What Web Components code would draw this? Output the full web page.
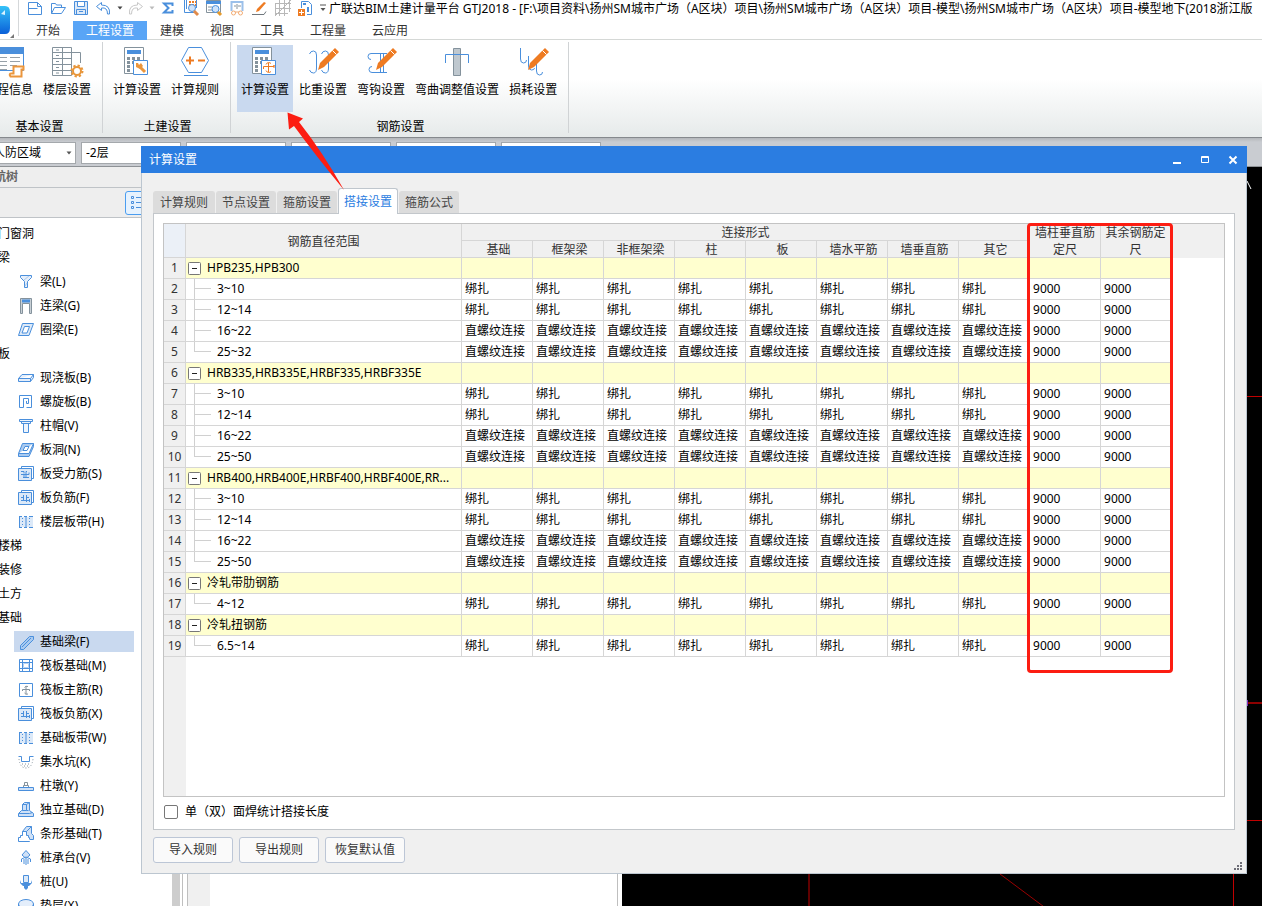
<!DOCTYPE html>
<html lang="zh-CN">
<head>
<meta charset="utf-8">
<title>广联达BIM土建计量平台 GTJ2018</title>
<style>
  html, body { margin: 0; height: 100%; overflow: hidden; }
  body { font: 12px/16px "Noto Sans", "Noto Sans CJK SC", sans-serif; color: #000; background: #fff; }
</style>
</head>
<body>
<cad-app></cad-app>
<script>
const B = '#4a8fdc', O = '#ee7b22', G = '#84929c';
const pencil = `<path d="M13 17 28 2l4 4-15 15-6 3z" fill="${O}"/><path d="m25.500 4.500 4 4" stroke="#fff"/>`.replaceAll('.500', '.5');
const calc = `<path d="M1.5 1.5h19v26h-19z" fill="#fff" stroke="${G}"/><path d="M4 4h14v4H4z" fill="${B}"/><path d="M4 11h3v3H4zm5 0h3v3H9zm5 0h3v3h-3zM4 15h3v3H4zm5 0h3v3H9zM4 19h3v3H4zm0 4h3v3H4z" fill="${G}"/><path d="M10.5 14.5h14v14h-14z" fill="#fff" stroke="${B}"/>`;
const sheet = `<path d="M3.5 2.500V.5h12v12h-2" fill="#fff" stroke="${B}"/><path d="M.5 2.5h13v12H.5z" fill="#dce9f8" stroke="${B}"/>`;
/* name: [width, height, markup] */
const ICONS = {
  logo: [20, 40, `<defs><linearGradient id="g" x2="0" y2="1"><stop stop-color="#35c2f8"/><stop offset="1" stop-color="#0a5fd8"/></linearGradient></defs><path d="M0 6h5q5 0 5 6v16q0 6-5 6H0z" fill="url(#g)"/><path d="m1 14 4-4v5z" fill="#d8f2ff"/><path d="M14 34v4h-4z" fill="#777"/><path d="M18.5 0v36" stroke="#d5d8da"/>`],
  doc: [14, 14, `<path d="M.5 1.5v12h13v-8l-4-4zM9.5 1.5v4h4M.5 7.5h9" fill="none" stroke="${B}"/>`],
  open: [16, 14, `<path d="M1.5 12.5v-10h4l1 1.5h5v3M1.5 12.5l3-6h11l-4 6z" fill="#fff" stroke="${B}"/>`],
  save: [14, 14, `<path d="M.5.5h13v13H.5zM3.500.5v5h7v-5M2.5 13.5v-5h9v5M5 10.5h4" fill="#dce9f8" stroke="${B}"/>`],
  undo: [15, 13, `<path d="m5.5.5-5 4 5 4V6q6-1 6 6h2q1-9-8-9z" fill="#fff" stroke="${B}"/>`],
  redo: [15, 13, `<path d="m9.5.5 5 4-5 4V6q-6-1-6 6h-2q-1-9 8-9z" fill="#fff" stroke="#c8c8c8"/>`],
  down: [6, 4, `<path d="M.5.5h5L3 3.5z" fill="currentColor"/>`],
  sum: [12, 12, `<path d="M10.5 4V1.500H2L6.500 6 2 10.5h8.500V8" fill="none" stroke="${B}" stroke-width="2"/>`],
  report: [16, 16, `<path d="M1.500 0v12.500H12M3.500 0v9" stroke="${B}" fill="none"/><path d="M6 2h8M6 5h8" stroke="${O}" stroke-width="2" stroke-dasharray="2 1"/><path d="M13.500 0v8" stroke="${B}"/><circle cx="9" cy="8" r="3.5" fill="#cfe3fa" stroke="${B}"/><path d="m11 11 4 4" stroke="#e08a4a" stroke-width="3"/>`],
  find: [16, 16, `<path d="M.5.5h14v12H.5z" fill="#fff" stroke="${G}"/><path d="M0 1h15v3H0z" fill="${B}"/><path d="M2 7h4M2 10h4" stroke="${G}"/><circle cx="9.5" cy="9" r="3.5" fill="#cfe3fa" stroke="${B}"/><path d="m12 12 3 3" stroke="#e59a2c" stroke-width="3"/>`],
  glasses: [14, 15, `<path d="M1.5 0v10M12.5 0v10M1 1h12" stroke="#9bc0ea" stroke-width="2"/><path d="M4 5h2m2 0h3M7 3v5" stroke="${G}"/><circle cx="3.5" cy="12" r="2" fill="none" stroke="#f2ac74"/><circle cx="10.5" cy="12" r="2" fill="none" stroke="#f2ac74"/><path d="M5 11h4" stroke="#f2ac74"/>`],
  pen: [15, 13, `<path d="M12 0l2 1-7 8-3 1 1-3z" fill="${O}"/><path d="M0 12.500h12l2-3" stroke="#6f777d" fill="none"/>`],
  mesh: [16, 16, `<path d="M.5 3v12.500M4.5 0v16M9.5 0v16M14.5 0v12M0 3.500h16M0 8.500h16M0 13.500h13M0 16 16 0" stroke="#b8b8b8" fill="none"/>`],
  adddoc: [15, 15, `<path d="M3.5 7V.5h7l3 3v10H9" fill="#fff" stroke="${B}"/><path d="M5 3h3m2 3v5" stroke="${B}" stroke-width="2"/><path d="M0 8h7v7H0z" fill="${O}"/><path d="M3.5 9v5M1 11.500h5" stroke="#fff"/>`],
  more: [6, 8, `<path d="M0 1h6" stroke="#555"/><path d="M.5 4h5L3 7z" fill="#555"/>`],
  info: [32, 32, `<path d="M1.5 2.500h29v22h-29z" fill="#fff" stroke="${B}"/><path d="M1 1h30v7H1z" fill="${B}"/><path d="M4 11.500h10m3 0h10M4 15.500h10m3 0h10M4 19.500h10m3 0h7M4 23.500h10" stroke="#97a1a8"/><path d="M20.500 20.500h10v3h-2v7h-11q-2-3 1-3h2z" fill="#fff" stroke="#eb963c" stroke-width="2"/>`],
  floors: [32, 32, `<path d="M1.5 1.500h19v28h-19zM1 6.500h20M1 12.500h20M1 18.500h20M1 24.500h20M11.500 1v29M21 6.500h8.500V17" fill="none" stroke="${G}"/><path d="M5 4h3M5 9.500h3M5 15.500h3M5 21.500h3M5 27h3" stroke="${G}"/><circle cx="26" cy="25" r="4" fill="#fff" stroke="#e8963a" stroke-width="2"/><circle cx="26" cy="25" r="5.500" fill="none" stroke="#e8963a" stroke-width="2" stroke-dasharray="2.300 2"/>`],
  calcwrench: [28, 30, calc + `<path d="m16 20 6 6" stroke="#eb963c" stroke-width="3"/><path d="M13 17h2l1 2 2-2 2 3-3 3-4-2z" fill="#eb963c"/>`],
  rules: [30, 30, `<path d="M8.500 1.500h13l7 13-7 12h-13l-7-12z" fill="#fff" stroke="${B}"/><path d="M6 14.500h8M10 10.500v8M18 14.500h7" stroke="${O}" stroke-width="2"/><path d="M4 29.500h24" stroke="${B}"/>`],
  calcplus: [28, 30, calc + `<path d="M12.500 23v-2.500H23V19M17.500 17v9M15 18.500q1-2 2.500-2t2.500 1M15 24.500q1 2 2.500 2t2.500-1M23 19v3" fill="none" stroke="${O}"/>`],
  weight: [32, 32, `<path d="M2.500 8q1-3 4-3t3 4v13q0 5-3 5t-4-3M14.500 8q1-3 4-3t3 4v13q0 5-3 5t-4-3" fill="none" stroke="${B}"/>` + pencil],
  hook: [32, 32, `<path d="M6 13.500q-3 0-3-3t3-3h16M7 20.500q-3 0-3 3t3 3h15M15.500 7v20M18.500 7v20" fill="none" stroke="${B}"/>` + pencil],
  bend: [30, 32, `<path d="M11.500 2.500h7v27h-7z" fill="#bfc8cf" stroke="${G}"/><path d="M3.500 17V8.500h23V17" fill="none" stroke="${B}"/>`],
  loss: [32, 32, `<path d="M3.500 2v11q0 4 3 4t3-3M11.500 10v10q0 4 3 4t3-2M19.500 18v7q0 4 3 4t3-3" fill="none" stroke="${B}"/>` + pencil],
  list: [16, 16, `<path d="M1.500 1.500h2v2h-2zm0 5h2v2h-2zm0 5h2v2h-2zM6 2.500h10M6 7.500h10M6 12.500h10" fill="none" stroke="${B}"/>`],
  beam: [16, 16, `<path d="M2.500 1.500h11v2l-4 4v6h-3v-6l-4-4z" fill="#e6effa" stroke="${B}"/><path d="m6 6 5-4M7 12l2-3" stroke="#a9c8ee"/>`],
  coupling: [16, 16, `<path d="M2.500.500h11v15h-2V5.500h-7v10h-2z" fill="#c8d0d6" stroke="${G}"/><path d="M4 3h8" stroke="${B}" stroke-width="3"/>`],
  ring: [16, 16, `<path d="M4.500 1.500h11l-4.500 12H.500zM6.500 4.500h5l-2.500 6.500H4z" fill="#dce9f8" fill-rule="evenodd" stroke="${B}"/>`],
  slab: [16, 16, `<path d="M.500 8.500 4 4.500h11.500v3l-3 4H.500zM.500 8.500h12l3-4M12.500 8.500v3" fill="#e4eefb" stroke="${B}"/>`],
  spiral: [16, 16, `<path d="M8.500 13.500h5v-12h-12v12h4v-9h5v5h-2v-2.500" fill="none" stroke="${B}"/>`],
  cap: [16, 16, `<path d="M1.500 1.500h13v2h-2v2h-2v9h-5v-9h-2v-2h-2zM3 3.500h10M5 5.500h6" fill="#eef5fd" stroke="${B}"/>`],
  hole: [16, 16, `<path d="M4.500 1.500h11l-4.500 10H.500zM.500 11.500v3h10.500l4.500-10v-3" fill="#a9caf0" stroke="${B}"/><path d="M7 4.500h4l-2 4H5z" fill="#fff" stroke="${B}"/>`],
  rebar: [16, 16, sheet + `<path d="M3 5.500h3v2M3 8.500h8M5 11.500h6m-5-3v3m3-6h-1v6m3-5v2" stroke="${B}"/>`],
  negbar: [16, 16, sheet + `<path d="M5.500 5v6m3-6v7m3-3v3M3 10.500h9M3 7.500h3m2 0h3" stroke="${B}"/>`],
  strip: [16, 16, `<path d="M1 3h14v10H1z" fill="#dce9f8"/><path d="M1 2.500h3m2 0h3m2 0h4M1 13.500h3m2 0h3m2 0h4M1.500 2v12M8 2v12" stroke="${B}"/><path d="M4.500 4v8m7-8v8" stroke="${B}" stroke-dasharray="1 2"/>`],
  found: [16, 16, `<path d="M11.500 2.500h4v3l-10 10H2.500v-4z" fill="#a9caf0" stroke="${B}"/><path d="M4 13l9-9" stroke="${B}"/>`],
  raft: [16, 16, `<path d="M1.500 1.500h13v12h-13zM4.500 1v13M11.500 1v13M1 4.500h14M1 10.500h14" fill="none" stroke="${B}"/><path d="M5.500 5.500h5v4h-5z" fill="#fff" stroke="#b4d0f2"/>`],
  mainbar: [16, 16, `<path d="M1.500 1.500h13v13h-13z" fill="#fff" stroke="${B}"/><path d="M4.500 9V7.500h7V9M8 4v8M6.500 5.500q1-2 3.500-1M6.500 11q1 2 3.500 1" stroke="${G}"/>`],
  pit: [16, 16, `<path d="M.500 2.500h3v5h8v-5h4" fill="none" stroke="${B}"/><path d="M1 5q1 9 7 9t7-9M4 10h9M6 12h5" fill="none" stroke="${G}" stroke-dasharray="1 2"/>`],
  pier: [16, 16, `<path d="M.500 9.500h15v3H.500z" fill="#cfe1f7" stroke="${B}"/><path d="M5.500 9V7.500h5V9M6.500 7V4.500h3V7" fill="none" stroke="${G}"/>`],
  pad: [16, 16, `<path d="M.500 11.500l3-3h1v-6l2-2h5v8l4 3v3h-15z" fill="#cfe1f7" stroke="${B}"/><path d="M1 11.500h10.500l3-1M4.500 2.500h4v6h-4m4-6 3-2m-3 8h2" stroke="${B}"/>`],
  stripf: [16, 16, `<path d="M4.500 5.500l4-5h5v7l2 2v4h-4v2H.500v-4h2v-2h2z" fill="#cfe1f7" stroke="${B}"/><path d="M5 6h4v3h1v2h2v4H1v-3h2v-2h2z" fill="#fff"/><path d="M4.500 5.500h4l5-5m-5 5v4h2v2h1v2" stroke="${B}"/>`],
  pilecap: [16, 16, `<path d="M8 .500 12 5 8 8.500 4 5z" fill="#cfe1f7" stroke="${B}"/><path d="M3.500 12V9L8 7l4.500 2v3M8 9v6M6 9v5m4-5v5" stroke="${B}" fill="none"/>`],
  pile: [16, 16, `<path d="M5.500 1.500h5v7h-5z" fill="#dce9f8" stroke="${B}"/><path d="M3 6v3h10V6l1 3-3 3h-1v2l-2 2-2-2v-2H5L2 9z" fill="${B}"/>`],
  cushion: [16, 16, `<ellipse cx="8" cy="6" rx="7.500" ry="4.500" fill="#e4eefb" stroke="${B}"/><path d="M.500 6v5q7 6 15 0V6" fill="none" stroke="${B}"/>`],
  min: [10, 10, `<path d="M1 7h8v2H1z" fill="#fff"/>`],
  max: [10, 10, `<path d="M1.500 1.500h7v6h-7zM1 2.500h8" fill="none" stroke="#fff"/>`],
  close: [10, 10, `<path d="m1.500 1.500 7 7m0-7-7 7" stroke="#fff" stroke-width="2"/>`],
  minus: [13, 13, `<rect x=".5" y=".5" width="12" height="12" rx="1" fill="#fff" stroke="#777"/><path d="M4 6.500h5" stroke="#222"/>`],
  grip: [9, 9, `<path d="M6 0h2v2H6zM3 3h2v2H3zm3 0h2v2H6zM0 6h2v2H0zm3 0h2v2H3zm3 0h2v2H6z" fill="#6d6d76"/>`]
};

function define(name, css, html) {
  customElements.define(name, class extends HTMLElement {
    constructor() {
      super();
      this.attachShadow({ mode: 'open' });
    }
    connectedCallback() {
      if (this.shadowRoot.firstChild) return;
      const body = typeof html === 'function' ? html(this) : html;
      this.shadowRoot.innerHTML = `<style>*{box-sizing:border-box}button,select{font:inherit;color:inherit}${css}</style>${body}`;
    }
  });
}

define('app-icon', `:host{display:block;flex:none}svg{display:block;overflow:visible}`, el => {
  const [w, h, m] = ICONS[el.getAttribute('name')];
  return `<svg width="${w}" height="${h}" viewBox="0 0 ${w} ${h}" fill="none" aria-hidden="true">${m}</svg>`;
});

/* Quick-access bar with the document title */
define('title-bar', `
  :host{display:flex;align-items:flex-start;height:18px;overflow:hidden}
  button{border:0;background:none;padding:0;width:23px;height:16px;display:flex;align-items:center;justify-content:center;flex:none}
  button.arrow{width:9px;color:#444}
  button.off{color:#bbb}
  button.more{width:12px}
  span{white-space:nowrap;line-height:18px}
`, () => {
  const b = (n, t, c = '') => `<button class="${c}" title="${t}"><app-icon name="${n}"></app-icon></button>`;
  return b('doc', '新建') + b('open', '打开') + b('save', '保存') + b('undo', '撤销') + b('down', '撤销列表', 'arrow') +
    b('redo', '恢复') + b('down', '恢复列表', 'arrow off') + b('sum', '汇总') + b('report', '查看报表') + b('find', '查找') +
    b('glasses', '查看') + b('pen', '绘制') + b('mesh', '网格') + b('adddoc', '添加') + b('more', '更多', 'more') +
    `<span>广联达BIM土建计量平台 GTJ2018 - [F:\\项目资料\\扬州SM城市广场（A区块）项目\\扬州SM城市广场（A区块）项目-模型\\扬州SM城市广场（A区块）项目-模型地下(2018浙江版</span>`;
});

define('menu-tab', `
  :host{display:block}
  button{display:block;border:0;background:none;padding:0 13px;height:19px;line-height:19px;color:#333;white-space:nowrap}
  :host([active]) button{background:#59a5f6;color:#fff}
`, `<button role="tab"><slot></slot></button>`);

define('ribbon-tool', `
  :host{display:block;flex:none}
  button{display:flex;flex-direction:column;align-items:center;border:0;background:none;padding:1px 4px 0;height:67px;white-space:nowrap}
  .pic{height:36px}
  :host([active]) button{background:#c9d9ef}
`, el => `<button><span class="pic"><app-icon name="${el.getAttribute('icon')}"></app-icon></span><span><slot></slot></span></button>`);

define('ribbon-group', `
  :host{display:flex;flex-direction:column;flex:none;border-right:1px solid #d0d3d5;padding:3px 7px 0 6px;margin:2px 0 4px}
  .tools{display:flex;gap:2px}
  .cap{text-align:center;padding:7px 0 0 3px}
`, el => `<div class="tools"><slot></slot></div><div class="cap">${el.getAttribute('label')}</div>`);

define('combo-box', `
  :host{display:block;position:relative;flex:none;width:100px}
  :host([short]){width:88px}
  select{appearance:none;display:block;width:100%;height:22px;border:1px solid #a4a8ac;background:#fff;border-radius:0;padding:0 4px}
  app-icon{position:absolute;right:4px;top:9px;color:#555;pointer-events:none}
`, el => `<select aria-label="${el.getAttribute('label')}"><option>${el.getAttribute('value') || ''}</option></select><app-icon name="down"></app-icon>`);

define('tree-item', `
  :host{display:block;height:24px}
  button{display:flex;align-items:center;gap:6px;width:100%;height:21px;border:0;background:none;padding:0;line-height:21px;text-align:left;white-space:nowrap}
  :host([icon]){padding-left:16px}
  :host([icon]) button{padding-left:4px}
  :host([active]) button{background:#c9d9ef}
`, el => `<button role="treeitem">${el.hasAttribute('icon') ? `<app-icon name="${el.getAttribute('icon')}"></app-icon>` : ''}<span><slot></slot></span></button>`);

define('nav-tree', `
  :host{display:flex;flex-direction:column;flex:none;width:183px;overflow:hidden;background:#fff;border-right:1px solid #bfbfbf}
  header{flex:none;height:21px;background:#eee;border-bottom:1px solid #bfc3c7;line-height:20px;color:#666;font-weight:bold;text-indent:-18px}
  .bar{flex:none;height:30px;background:#eee;border-bottom:1px solid #bfc3c7;padding:3px 0 0 125px}
  .bar button{width:26px;height:24px;padding:3px 4px;border:1px solid #4a9df0;border-radius:3px;background:#e6f2fe}
  .list{flex:1;display:flex;min-height:0}
  nav{flex:1;padding-top:5px;margin-left:-2px;overflow:hidden}
  tree-item{margin-right:38px}
  .scroll{width:8px;background:#cdcdcd;margin-right:2px}
`, () => {
  const rows = [['门窗洞'], ['梁'], ['梁(L)', 'beam'], ['连梁(G)', 'coupling'], ['圈梁(E)', 'ring'], ['板'], ['现浇板(B)', 'slab'],
    ['螺旋板(B)', 'spiral'], ['柱帽(V)', 'cap'], ['板洞(N)', 'hole'], ['板受力筋(S)', 'rebar'], ['板负筋(F)', 'negbar'],
    ['楼层板带(H)', 'strip'], ['楼梯'], ['装修'], ['土方'], ['基础'], ['基础梁(F)', 'found', 1], ['筏板基础(M)', 'raft'],
    ['筏板主筋(R)', 'mainbar'], ['筏板负筋(X)', 'negbar'], ['基础板带(W)', 'strip'], ['集水坑(K)', 'pit'], ['柱墩(Y)', 'pier'],
    ['独立基础(D)', 'pad'], ['条形基础(T)', 'stripf'], ['桩承台(V)', 'pilecap'], ['桩(U)', 'pile'], ['垫层(X)', 'cushion']];
  return `<header>导航树</header><div class="bar"><button title="列表"><app-icon name="list"></app-icon></button></div>
    <div class="list"><nav role="tree">${rows.map(([t, i, a]) => `<tree-item${i ? ` icon="${i}"` : ''}${a ? ' active' : ''}>${t}</tree-item>`).join('')}</nav><div class="scroll"></div></div>`;
});

define('model-canvas', `
  :host{display:block;flex:1;min-width:0;background:#000;overflow:hidden}
  svg{display:block;width:100%;height:100%}
`, `<svg aria-label="轴网"><g stroke="#c00000" fill="none"><path d="M0 229.5h900M0 653.5h900M187 0v900"/><path d="M611.5 0v900"/><path d="M0 536h900" stroke="#8c0000" stroke-width="2"/><path d="M378 707l130 97" stroke="#900"/></g><path d="M622 536h4" stroke="#7a30c0" stroke-width="6"/><path d="m625 14 4 8" stroke="#fff"/></svg>`);

define('dialog-tab', `
  :host{display:block}
  button{display:block;border:1px solid #dcdcdc;border-bottom:0;background:#dcdcdc;border-radius:3px 3px 0 0;height:22px;padding:0 5px;line-height:22px;color:#444;white-space:nowrap}
  :host(:first-child) button{padding:0 6px}
  :host([active]) button{background:#fff;border-color:#bfc6cd;color:#2b7de1;height:26px;line-height:24px}
  :host([active]){margin-bottom:-1px;position:relative}
`, `<button role="tab"><slot></slot></button>`);

define('lap-table', `
  :host{display:block;position:relative;flex:1;min-height:0;border:1px solid #c3c3c3;
    background:linear-gradient(#f0f0f0,#f0f0f0) 0 0/22px 100% no-repeat,linear-gradient(#f0f0f0,#f0f0f0) 0 0/100% 34px no-repeat,#fff}
  table{table-layout:fixed;border-collapse:separate;border-spacing:0;width:1007px}
  th,td{padding:0 4px 0 3px;white-space:nowrap;overflow:hidden;font-weight:normal}
  thead th{height:17px;line-height:17px;color:#333;white-space:normal;box-shadow:inset -1px -1px #d6d6d6}
  thead tr+tr th{padding-left:6px}
  thead th.corner{background:#ebf0f7}
  tbody th,tbody td{height:21px;line-height:20px;border:solid #d6d6d6;border-width:0 1px 1px 0}
  tbody td{padding-right:0}
  tbody th{padding:0;background:#f0f0f0;color:#333;text-align:center}
  tr.group td{background:#ffffcf}
  tbody td.name{padding:0}
  .in{display:flex;align-items:center;height:20px}
  .in button{border:0;padding:0;background:none;margin:0 6px 0 2px;display:block}
  .branch{width:25px;height:21px;margin:0 6px 0 0;background:linear-gradient(#d0d0d0,#d0d0d0) 8px 0/1px 21px no-repeat,linear-gradient(#d0d0d0,#d0d0d0) 8px 9px/17px 1px no-repeat}
  .last .branch{background-size:1px 10px,17px 1px}
  .mark{position:absolute;left:863px;top:-1px;width:146px;height:450px;border:3px solid #fc1d12;border-radius:4px;pointer-events:none}
`, () => {
  const b = '绑扎', z = '直螺纹连接';
  const groups = [
    ['HPB235,HPB300', [['3~10', b], ['12~14', b], ['16~22', z], ['25~32', z]]],
    ['HRB335,HRB335E,HRBF335,HRBF335E', [['3~10', b], ['12~14', b], ['16~22', z], ['25~50', z]]],
    ['HRB400,HRB400E,HRBF400,HRBF400E,RR...', [['3~10', b], ['12~14', b], ['16~22', z], ['25~50', z]]],
    ['冷轧带肋钢筋', [['4~12', b]]],
    ['冷轧扭钢筋', [['6.5~14', b]]]
  ];
  let n = 0, out = '';
  for (const [g, kids] of groups) {
    out += `<tr class="group"><th scope="row">${++n}</th><td class="name"><div class="in"><button aria-label="折叠"><app-icon name="minus"></app-icon></button>${g}</div></td>${'<td></td>'.repeat(10)}</tr>`;
    kids.forEach(([k, v], i) => {
      out += `<tr class="${i === kids.length - 1 ? 'last' : ''}"><th scope="row">${++n}</th><td class="name"><div class="in"><span class="branch"></span>${k}</div></td>${`<td>${v}</td>`.repeat(8)}${'<td>9000</td>'.repeat(2)}</tr>`;
    });
  }
  return `<table><colgroup><col style="width:22px"><col style="width:276px"><col span="9" style="width:71px"><col style="width:70px"></colgroup>
    <thead><tr><th class="corner" rowspan="2"></th><th rowspan="2">钢筋直径范围</th><th colspan="8">连接形式</th><th rowspan="2">墙柱垂直筋定尺</th><th rowspan="2">其余钢筋定尺</th></tr>
    <tr>${['基础', '框架梁', '非框架梁', '柱', '板', '墙水平筋', '墙垂直筋', '其它'].map(t => `<th>${t}</th>`).join('')}</tr></thead>
    <tbody>${out}</tbody></table><div class="mark"></div>`;
});

define('push-button', `
  :host{display:block}
  button{display:block;min-width:80px;height:26px;border:1px solid #bcc6d6;border-radius:3px;background:#fafafa;color:#333;padding:0 8px;line-height:24px}
`, `<button><slot></slot></button>`);

define('settings-dialog', `
  :host{display:flex;flex-direction:column;background:#f0f0f0;border:1px solid #bcc6d0;border-top:0}
  header{flex:none;display:flex;align-items:center;height:27px;margin:0 -1px;padding:0 0 0 8px;background:#2b7de1;color:#fff}
  header span{flex:1}
  header button{border:0;background:none;width:28px;height:27px;display:flex;align-items:center;justify-content:center;padding:0}
  .tabs{flex:none;display:flex;align-items:flex-end;gap:1px;height:40px;padding-left:11px}
  .panel{flex:1;min-height:0;display:flex;flex-direction:column;margin:0 11px;padding:9px;padding-bottom:0;border:1px solid #c3c7cb;background:#fff}
  label{flex:none;display:flex;align-items:center;gap:7px;height:32px;padding-bottom:2px}
  input{appearance:none;width:14px;height:14px;margin:0 0 0 1px;border:1px solid #777;border-radius:2px;background:#fff}
  footer{flex:none;display:flex;gap:6px;padding:7px 11px 10px;position:relative}
  footer app-icon{position:absolute;right:3px;bottom:2px}
`, `<header><span>计算设置</span><button title="最小化"><app-icon name="min"></app-icon></button><button title="最大化"><app-icon name="max"></app-icon></button><button title="关闭"><app-icon name="close"></app-icon></button></header>
  <div class="tabs" role="tablist"><dialog-tab>计算规则</dialog-tab><dialog-tab>节点设置</dialog-tab><dialog-tab>箍筋设置</dialog-tab><dialog-tab active>搭接设置</dialog-tab><dialog-tab>箍筋公式</dialog-tab></div>
  <div class="panel"><lap-table></lap-table><label><input type="checkbox">单（双）面焊统计搭接长度</label></div>
  <footer><push-button>导入规则</push-button><push-button>导出规则</push-button><push-button>恢复默认值</push-button><app-icon name="grip"></app-icon></footer>`);

define('cad-app', `
  :host{display:flex;flex-direction:column;position:relative;height:100vh;overflow:hidden}
  .top{flex:none;display:flex;height:40px;border-bottom:1px solid #d5d8d6}
  .head{flex:1;min-width:0;padding-left:3px}
  .menu{display:flex;padding-top:3px}
  .ribbon{flex:none;display:flex;height:98px;background:linear-gradient(#fff 40%,#e6eaea);border-bottom:1px solid #85898d}
  .ribbon ribbon-group:first-child{margin-left:-25px}
  .combos{flex:none;display:flex;gap:5px;height:29px;padding-top:4px;background:linear-gradient(#b4b7bb,#c9ccd1 4px);border-bottom:1px solid #8e9296}
  .combos combo-box:first-child{margin-left:-12px}
  .work{flex:1;display:flex;min-height:0}
  .props{flex:none;width:431px;margin:0 4px;border:solid #bfbfbf;border-width:0 1px;background:linear-gradient(90deg,#f0f0f0 22px,#fff 22px)}
  settings-dialog{position:absolute;inset:146px 15px 32px 141px}
  .arrow{position:absolute;left:284px;top:110px;pointer-events:none}
`, `<div class="top"><app-icon name="logo"></app-icon><div class="head"><title-bar></title-bar><div class="menu" role="tablist"><menu-tab>开始</menu-tab><menu-tab active>工程设置</menu-tab><menu-tab>建模</menu-tab><menu-tab>视图</menu-tab><menu-tab>工具</menu-tab><menu-tab>工程量</menu-tab><menu-tab>云应用</menu-tab></div></div></div>
  <div class="ribbon">
    <ribbon-group label="基本设置"><ribbon-tool icon="info">工程信息</ribbon-tool><ribbon-tool icon="floors">楼层设置</ribbon-tool></ribbon-group>
    <ribbon-group label="土建设置"><ribbon-tool icon="calcwrench">计算设置</ribbon-tool><ribbon-tool icon="rules">计算规则</ribbon-tool></ribbon-group>
    <ribbon-group label="钢筋设置"><ribbon-tool icon="calcplus" active>计算设置</ribbon-tool><ribbon-tool icon="weight">比重设置</ribbon-tool><ribbon-tool icon="hook">弯钩设置</ribbon-tool><ribbon-tool icon="bend">弯曲调整值设置</ribbon-tool><ribbon-tool icon="loss">损耗设置</ribbon-tool></ribbon-group>
  </div>
  <div class="combos"><combo-box short label="区域" value="人防区域"></combo-box><combo-box label="楼层" value="-2层"></combo-box><combo-box label="构件类别"></combo-box><combo-box label="构件类型"></combo-box><combo-box label="构件"></combo-box><combo-box label="分层"></combo-box></div>
  <div class="work"><nav-tree></nav-tree><div class="props"></div><model-canvas></model-canvas></div>
  <settings-dialog role="dialog" aria-label="计算设置"></settings-dialog>
  <svg class="arrow" width="64" height="84" viewBox="0 0 64 84" aria-hidden="true"><path d="M3.500 2.500 19 8.500l-4 3.500Q38 41 60 80 32 46 10 16l-5 3.500z" fill="#fc1d12"/></svg>`);
</script>
</body>
</html>
